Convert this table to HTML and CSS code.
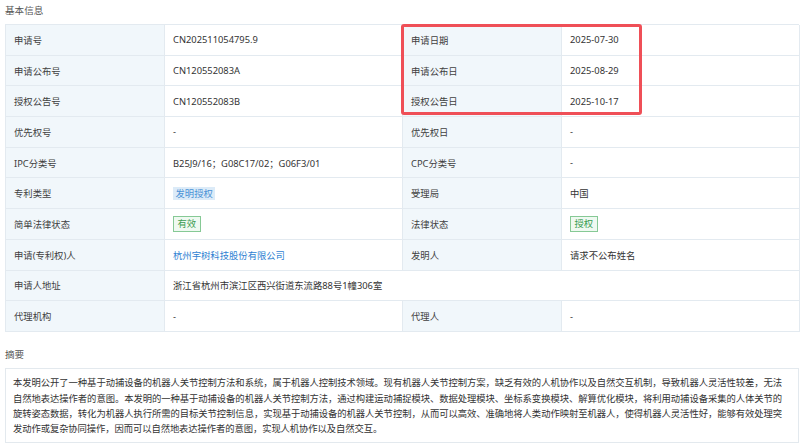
FILE: index.html
```html
<!DOCTYPE html>
<html lang="zh-CN">
<head>
<meta charset="utf-8">
<title>基本信息</title>
<link rel="stylesheet" href="styles.css">
</head>
<body>
<div class="page">
  <div class="section-title">基本信息</div>
  <div class="table-wrap">
    <div class="info-table">
      <div class="cell label">申请号</div>
      <div class="cell value">CN202511054795.9</div>
      <div class="cell label">申请日期</div>
      <div class="cell value">2025-07-30</div>

      <div class="cell label">申请公布号</div>
      <div class="cell value">CN120552083A</div>
      <div class="cell label">申请公布日</div>
      <div class="cell value">2025-08-29</div>

      <div class="cell label">授权公告号</div>
      <div class="cell value">CN120552083B</div>
      <div class="cell label">授权公告日</div>
      <div class="cell value">2025-10-17</div>

      <div class="cell label">优先权号</div>
      <div class="cell value">-</div>
      <div class="cell label">优先权日</div>
      <div class="cell value">-</div>

      <div class="cell label">IPC分类号</div>
      <div class="cell value">B25J9/16；G08C17/02；G06F3/01</div>
      <div class="cell label">CPC分类号</div>
      <div class="cell value">-</div>

      <div class="cell label">专利类型</div>
      <div class="cell value"><span class="tag tag-blue">发明授权</span></div>
      <div class="cell label">受理局</div>
      <div class="cell value">中国</div>

      <div class="cell label">简单法律状态</div>
      <div class="cell value"><span class="tag tag-green">有效</span></div>
      <div class="cell label">法律状态</div>
      <div class="cell value"><span class="tag tag-green">授权</span></div>

      <div class="cell label">申请(专利权)人</div>
      <div class="cell value"><a class="link" href="#">杭州宇树科技股份有限公司</a></div>
      <div class="cell label">发明人</div>
      <div class="cell value">请求不公布姓名</div>

      <div class="cell label">申请人地址</div>
      <div class="cell value span3">浙江省杭州市滨江区西兴街道东流路88号1幢306室</div>

      <div class="cell label">代理机构</div>
      <div class="cell value">-</div>
      <div class="cell label">代理人</div>
      <div class="cell value">-</div>
    </div>
    <div class="highlight"></div>
  </div>

  <div class="section-title abstract-title">摘要</div>
  <div class="abstract">本发明公开了一种基于动捕设备的机器人关节控制方法和系统，属于机器人控制技术领域。现有机器人关节控制方案，缺乏有效的人机协作以及自然交互机制，导致机器人灵活性较差，无法自然地表达操作者的意图。本发明的一种基于动捕设备的机器人关节控制方法，通过构建运动捕捉模块、数据处理模块、坐标系变换模块、解算优化模块，将利用动捕设备采集的人体关节的旋转姿态数据，转化为机器人执行所需的目标关节控制信息，实现基于动捕设备的机器人关节控制，从而可以高效、准确地将人类动作映射至机器人，使得机器人灵活性好，能够有效处理突发动作或复杂协同操作，因而可以自然地表达操作者的意图，实现人机协作以及自然交互。</div>
</div>
</body>
</html>
```

FILE: styles.css
```css
html, body {
  margin: 0;
  padding: 0;
  background: #ffffff;
}

body {
  font-family: "Noto Sans", "Noto Sans CJK SC", sans-serif;
  font-size: 9.33px;
  color: #333333;
}

.page {
  padding: 4px 3px 0 5px;
}

.section-title {
  font-size: 9.6px;
  line-height: 14px;
  color: #555555;
  margin-bottom: 6px;
}

.abstract-title {
  margin-top: 16px;
}

.table-wrap {
  position: relative;
}

.info-table {
  display: grid;
  grid-template-columns: 159px 238px 159px 238px;
  grid-auto-rows: 30.7px;
  border-top: 1px solid #e3eaf0;
  border-left: 1px solid #e3eaf0;
  width: 794px;
  box-sizing: border-box;
}

.cell {
  display: flex;
  align-items: center;
  padding: 0 8px;
  border-right: 1px solid #e3eaf0;
  border-bottom: 1px solid #e3eaf0;
  white-space: nowrap;
  overflow: hidden;
}

.label {
  background: #f1f7fb;
  color: #404040;
}

.value {
  background: #ffffff;
  color: #333333;
}

.span3 {
  grid-column: span 3;
}

.tag {
  display: inline-block;
  line-height: 11px;
}

.tag-blue {
  background: #dcebf8;
  color: #4a92d6;
  padding: 1px 2.5px;
}

.tag-green {
  background: #eff9f1;
  color: #3a9c50;
  border: 1px solid #86c995;
  padding: 1.5px 3.5px;
}

.link {
  color: #2e7fd2;
  text-decoration: none;
}

.highlight {
  position: absolute;
  left: 396px;
  top: 0;
  width: 241px;
  height: 91px;
  border: 3px solid #ef4f57;
  border-radius: 3px;
  box-sizing: border-box;
  pointer-events: none;
}

.abstract {
  width: 794px;
  box-sizing: border-box;
  border: 1px solid #e3e9ee;
  padding: 6.5px 16px 5px 7px;
  line-height: 15.33px;
  letter-spacing: -0.1px;
  line-break: anywhere;
  text-align: justify;
  color: #333333;
}
```
